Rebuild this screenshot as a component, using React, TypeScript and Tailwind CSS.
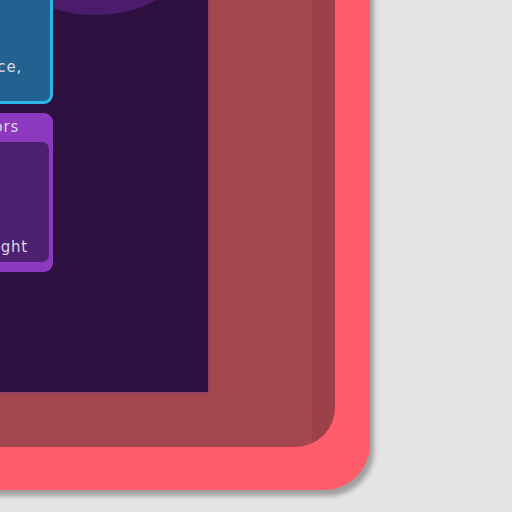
const App = () => {
  return (
    <div className="w-[512px] h-[512px] overflow-hidden bg-[#e4e4e4] font-['DejaVu_Sans',sans-serif]">
      {/* Outer pink frame (top-left part sits off screen) */}
      <div className="inline-flex -ml-[60px] -mt-[60px] bg-[#ff5d6c] pl-[20px] pt-[20px] pr-[35px] pb-[43px] rounded-br-[46px] shadow-[4px_6px_5px_rgba(0,0,0,0.3)]">
        {/* Dark red bezel */}
        <div className="flex bg-[#a3464e] pl-[20px] pt-[20px] rounded-br-[40px] overflow-hidden">
          <div className="flex flex-col">
            {/* Screen */}
            <div className="relative w-[228px] h-[412px] bg-[#2d1040] overflow-hidden shadow-[1px_1px_2px_rgba(120,60,140,0.6)]">
              {/* Top glow */}
              <div className="absolute left-[25px] -top-[75px] w-[180px] h-[110px] rounded-[50%] bg-[#4b1b6c]" />

              {/* Cards */}
              <div className="relative flex flex-col gap-[9px] w-[73px] text-[15px] leading-[20px] text-[#ddd6e6]">
                <div className="flex flex-col justify-end h-[124px] bg-[#226290] border-[3px] border-t-0 border-l-0 border-[#2cb6e6] rounded-br-[9px] pr-[28px] pb-[24px]">
                  <div className="flex justify-end">
                    <span className="shrink-0 whitespace-nowrap tracking-[0.8px]">performance,</span>
                  </div>
                </div>

                <div className="flex flex-col h-[159px] bg-[#8d39bf] rounded-r-[9px] pt-[4px] pr-[4px] pb-[10px]">
                  <div className="flex justify-end h-[25px] pr-[30px]">
                    <span className="shrink-0 whitespace-nowrap tracking-[0.8px]">Colors</span>
                  </div>
                  <div className="flex flex-col justify-end h-[120px] bg-[#4e2070] rounded-r-[7px] pr-[21px] pb-[5px]">
                    <div className="flex justify-end">
                      <span className="shrink-0 whitespace-nowrap tracking-[0.8px]">Highlight</span>
                    </div>
                  </div>
                </div>
              </div>
            </div>
            <div className="h-[55px]" />
          </div>

          {/* Right side of bezel with slight shading */}
          <div className="w-[127px] flex">
            <div className="flex-1" />
            <div className="w-[23px] bg-[#9c4049]" />
          </div>
        </div>
      </div>
    </div>
  );
};

export default App;
